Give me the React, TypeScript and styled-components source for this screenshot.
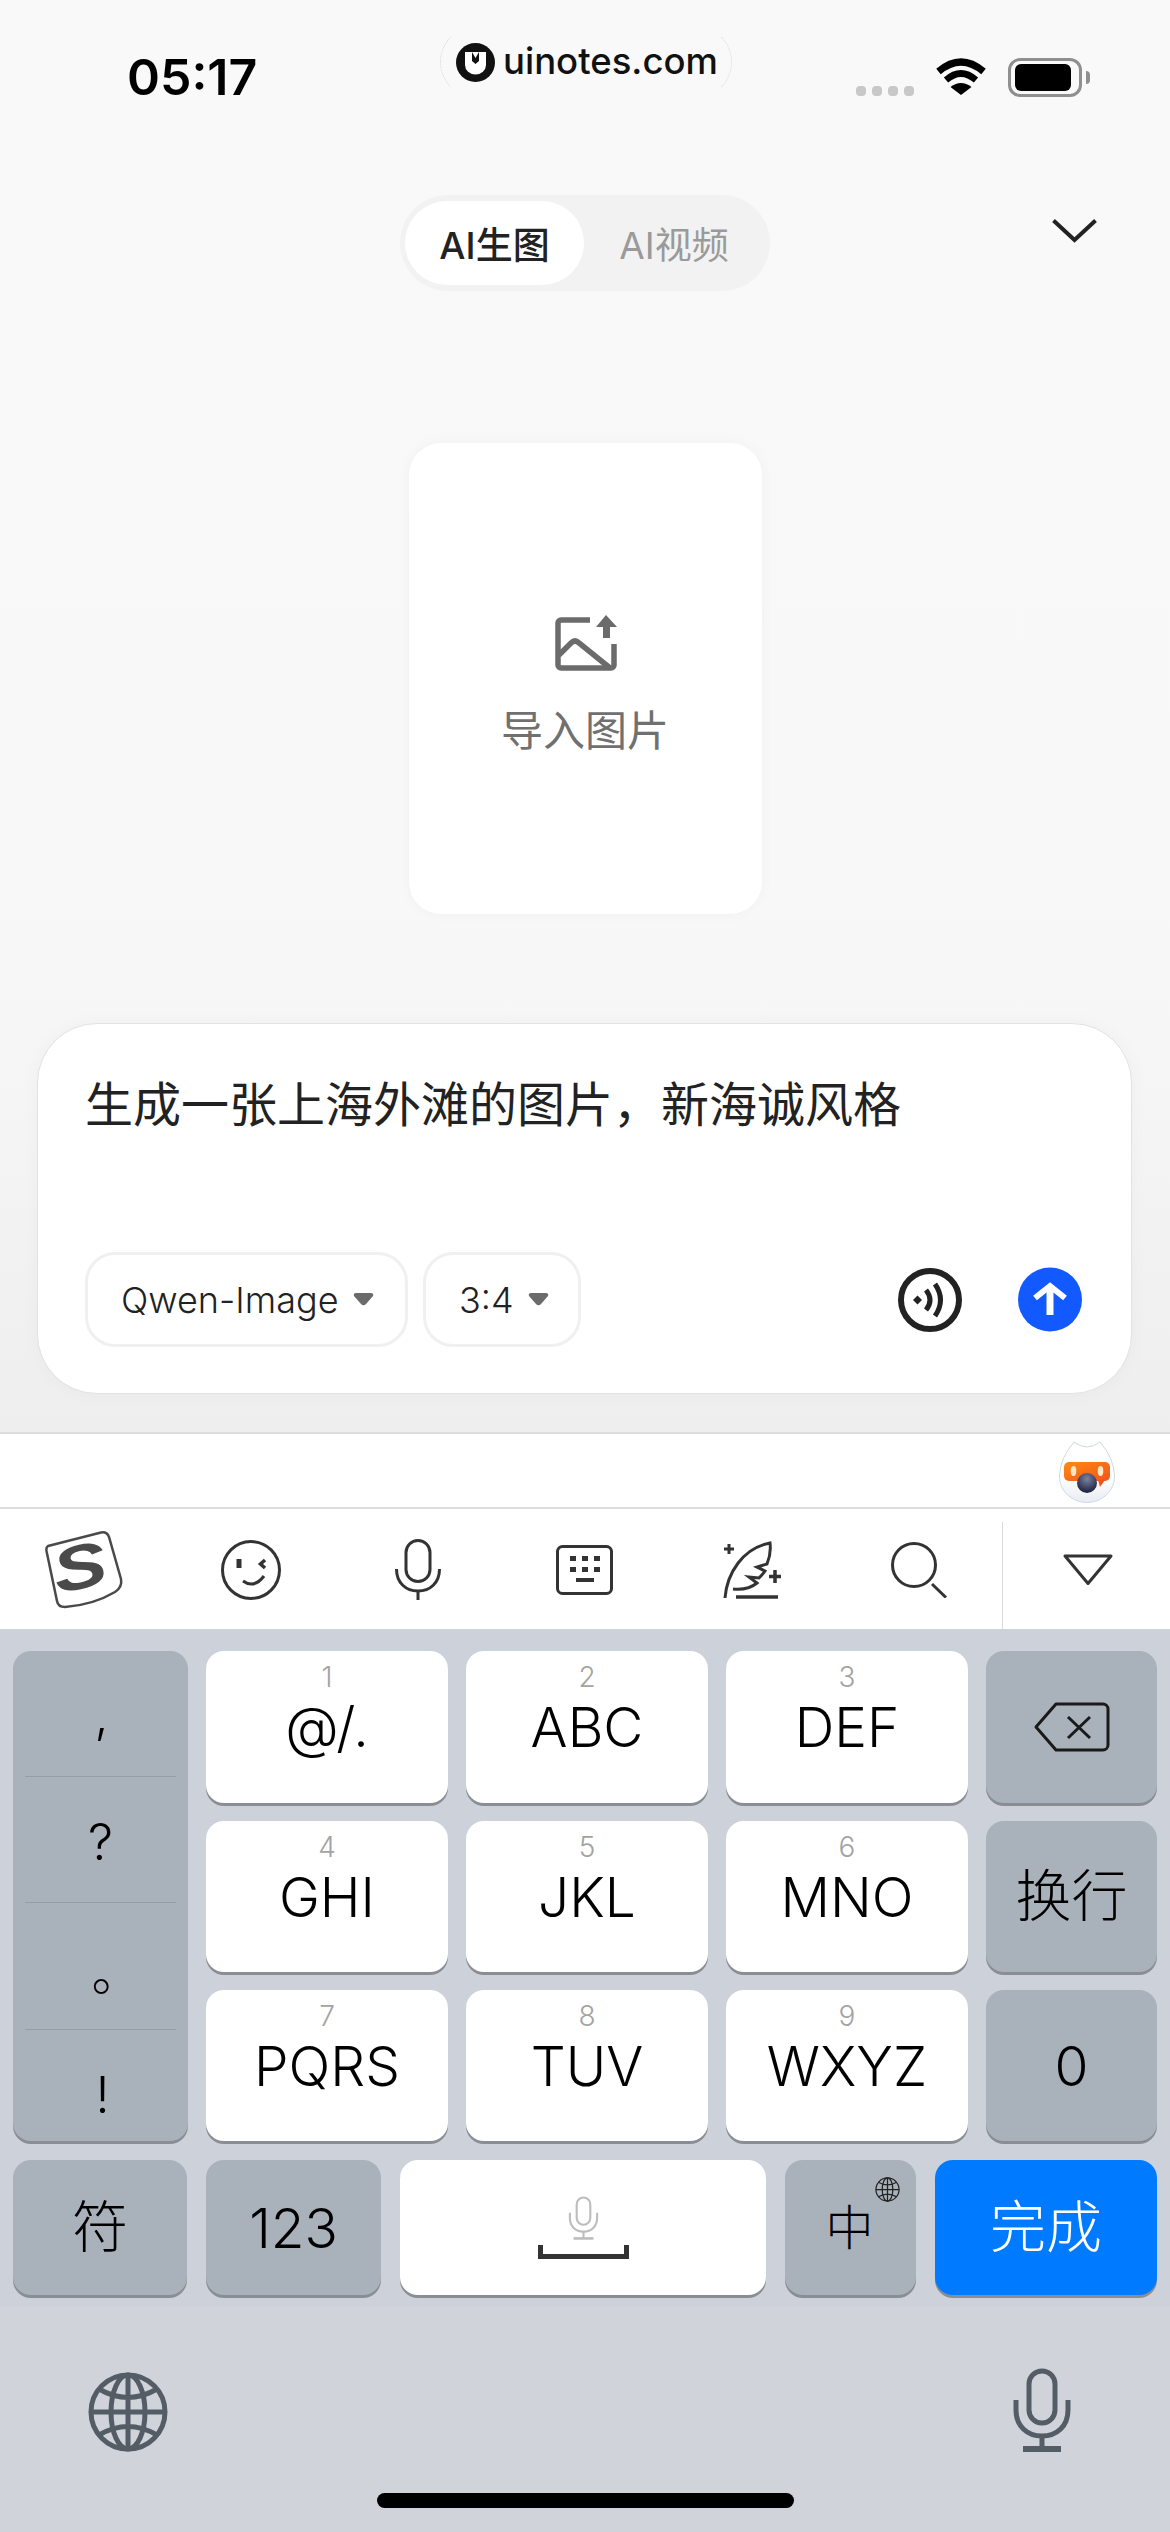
import { Fragment } from 'react';
import styled, { createGlobalStyle } from 'styled-components';

const FONT = `Inter, "Noto Sans CJK SC", sans-serif`;

const GlobalStyle = createGlobalStyle`
  html, body {
    margin: 0;
    padding: 0;
    background: #f9f9f9;
  }
  * {
    box-sizing: border-box;
  }
`;

const Page = styled.div`
  width: 1170px;
  height: 2532px;
  overflow: hidden;
  display: flex;
  flex-direction: column;
  font-family: ${FONT};
`;

const Upper = styled.div`
  height: 1432px;
  display: flex;
  flex-direction: column;
  background: linear-gradient(#f9f9f9 0, #f8f8f8 900px, #f5f5f5 1100px, #eeeeee 1432px);
`;

const StatusBar = styled.div`
  height: 110px;
  display: grid;
  grid-template-columns: 440px 292px 1fr;
`;

const Time = styled.div`
  padding: 47px 0 0 127px;
  font-size: 50px;
  line-height: 60px;
  font-weight: 600;
  color: #000;
`;

const LogoPill = styled.div`
  margin-top: 26px;
  height: 72px;
  border: 1px dotted;
  border-color: transparent #d4d4d4;
  border-radius: 36px;
  display: flex;
  align-items: center;
  gap: 8px;
  padding-left: 15px;
`;

const LogoText = styled.span`
  margin-top: -3px;
  font-size: 36.5px;
  font-weight: 500;
  color: #111;
`;

const StatusIcons = styled.div`
  display: flex;
  padding: 58px 0 0 124px;
`;

const SignalDots = styled.div`
  display: flex;
  gap: 6px;
  margin: 28px 22px 0 0;
`;

const SignalDot = styled.span`
  width: 10px;
  height: 10px;
  border-radius: 4px;
  background: #c8c8c8;
`;

const BatteryOuter = styled.div`
  position: relative;
  width: 74px;
  height: 39px;
  margin-left: 22px;
  border: 3px solid #8f8f8f;
  border-radius: 12px;
  padding: 3px 8px 3px 4px;
`;

const BatteryFill = styled.div`
  height: 100%;
  border-radius: 6px;
  background: #000;
`;

const BatteryNub = styled.span`
  position: absolute;
  right: -11px;
  top: 10px;
  width: 4px;
  height: 13px;
  border-radius: 0 4px 4px 0;
  background: #8f8f8f;
`;

const TabRow = styled.div`
  margin-top: 85px;
  display: grid;
  grid-template-columns: 400px 370px 1fr;
`;

const Tabs = styled.div`
  grid-column: 2;
  height: 96px;
  padding: 6px 5px;
  border-radius: 48px;
  background: #f2f2f2;
  display: flex;
`;

const Tab = styled.div<{ $active?: boolean }>`
  width: ${({ $active }) => ($active ? '179px' : '180px')};
  flex-shrink: 0;
  border-radius: 42px;
  display: flex;
  align-items: center;
  justify-content: center;
  font-size: 37px;
  font-weight: ${({ $active }) => ($active ? 500 : 400)};
  color: ${({ $active }) => ($active ? '#222' : '#9a9a9a')};
  background: ${({ $active }) => ($active ? '#fff' : 'transparent')};
`;

const Chevron = styled.svg`
  margin: 24px 0 0 282px;
`;

const ImportCard = styled.div`
  align-self: center;
  margin-top: 152px;
  width: 353px;
  height: 471px;
  border-radius: 32px;
  background: #fff;
  box-shadow: 0 0 14px rgba(0, 0, 0, 0.035);
  display: flex;
  flex-direction: column;
  align-items: center;
  padding-top: 172px;
`;

const ImportLabel = styled.div`
  margin-top: 32px;
  font-size: 42px;
  line-height: 56px;
  color: #707070;
`;

const Composer = styled.div`
  margin: 109px 38px 0 37px;
  height: 371px;
  border: 1px solid #e2e2e2;
  border-radius: 60px;
  background: #fff;
  box-shadow: 0 0 18px rgba(0, 0, 0, 0.03);
  padding: 53px 49px 46px 47px;
  display: flex;
  flex-direction: column;
  justify-content: space-between;
`;

const Prompt = styled.div`
  font-size: 48px;
  line-height: 56px;
  color: #222;
`;

const ComposerBar = styled.div`
  display: flex;
  align-items: center;
`;

const Chip = styled.div<{ $width: number }>`
  width: ${({ $width }) => $width}px;
  height: 95px;
  margin-right: 15px;
  padding-left: 33px;
  border: 3px solid #f0f0f0;
  border-radius: 30px;
  display: flex;
  align-items: center;
  gap: 14px;
  font-size: 36px;
  font-weight: 300;
  color: #222;
`;

const VoiceIcon = styled.svg`
  margin-left: auto;
`;

const SendIcon = styled.svg`
  margin-left: 56px;
`;

const CandidateBar = styled.div`
  height: 77px;
  border-top: 2px solid #dcdcdc;
  border-bottom: 2px solid #dcdcdc;
  background: #fff;
  display: flex;
  justify-content: flex-end;
  padding: 6px 55px 0 0;
`;

const ToolBar = styled.div`
  height: 120px;
  background: #fff;
  display: grid;
  grid-template-columns: repeat(7, 167px);
`;

const ToolCell = styled.div<{ $divided?: boolean }>`
  display: flex;
  align-items: center;
  justify-content: center;
  padding: 0 0 12px ${({ $divided }) => ($divided ? '3px' : '0')};
  margin-top: 13px;
  border-left: ${({ $divided }) => ($divided ? '1px solid #dadada' : 'none')};
`;

const Keyboard = styled.div`
  flex: 1;
  display: flex;
  flex-direction: column;
  background: #cdd1d9;
`;

const KeyArea = styled.div`
  height: 678px;
  padding: 22px 13px 0;
`;

const KeyGrid = styled.div`
  display: grid;
  grid-template-columns: 175px 242px 242px 242px 171px;
  grid-template-rows: 152px 151px 151px;
  gap: 18px;
`;

const BottomRow = styled.div`
  margin-top: 19px;
  display: flex;
  gap: 19px;
`;

const Key = styled.div<{ $tone?: 'light' | 'dark' | 'blue'; $width?: number }>`
  position: relative;
  ${({ $width }) => ($width ? `width: ${$width}px; height: 135px;` : '')}
  border-radius: 18px;
  display: flex;
  flex-direction: column;
  align-items: center;
  justify-content: center;
  font-weight: 300;
  color: ${({ $tone }) => ($tone === 'blue' ? '#fff' : '#000')};
  background: ${({ $tone }) =>
    $tone === 'blue' ? '#007aff' : $tone === 'dark' ? '#a9b1ba' : '#fff'};
  box-shadow: 0 3px 0 #8a8e94;
`;

const NumberKey = styled(Key)`
  justify-content: flex-start;
  padding-top: 9px;
`;

const KeyDigit = styled.div`
  font-size: 28px;
  line-height: 34px;
  color: #a3a3a3;
`;

const KeyLetters = styled.div`
  margin-top: 2px;
  font-size: 55px;
  line-height: 62px;
`;

const KeyLabel = styled.div<{ $size?: number; $shift?: number }>`
  margin-left: ${({ $shift }) => $shift || 0}px;
  font-size: ${({ $size }) => $size || 56}px;
  line-height: 1.2;
`;

const PunctuationKey = styled(Key)`
  grid-row: 1 / span 3;
  justify-content: flex-start;
  padding: 0 12px;
`;

const Punctuation = styled.div<{ $height: number; $pull: number; $shift?: number; $last?: boolean }>`
  width: 100%;
  height: ${({ $height }) => $height}px;
  display: flex;
  align-items: center;
  justify-content: center;
  padding-top: ${({ $pull }) => $pull}px;
  padding-left: ${({ $shift }) => $shift || 0}px;
  font-size: 50px;
  font-weight: 300;
  border-bottom: ${({ $last }) => ($last ? 'none' : '1px solid #959ca6')};
`;

const SmallGlobe = styled.svg`
  position: absolute;
  top: 16px;
  right: 16px;
`;

const SpaceBar = styled.div`
  width: 91px;
  height: 14px;
  margin-top: 5px;
  border: 5px solid #333;
  border-top: none;
`;

const Footer = styled.div`
  flex: 1;
  background: #d0d4da;
  display: flex;
  flex-direction: column;
  padding-top: 60px;
`;

const FooterIcons = styled.div`
  height: 85px;
  display: flex;
  align-items: flex-end;
  justify-content: space-between;
  padding: 0 99px 0 88px;
`;

const HomeBar = styled.div`
  align-self: center;
  width: 417px;
  height: 15px;
  margin-top: 41px;
  border-radius: 8px;
  background: #000;
`;

function UinotesLogo() {
  return (
    <svg width="39" height="39" viewBox="0 0 39 39">
      <circle cx="19.5" cy="19.5" r="19.5" fill="#111" />
      <path d="M9 9h21v13a10.5 9.5 0 0 1-21 0z" fill="#fff" />
      <path d="M16 9v9l3.500 3 3.500-3V9l-3.500 6z" fill="#111" />
    </svg>
  );
}

function Wifi() {
  return (
    <svg width="50" height="37" viewBox="0 0 50 37" fill="none" stroke="#000">
      <path d="M2.500 13.500Q25-5.500 47.500 13.500" strokeWidth="7" />
      <path d="M10 22Q25 9 40 22" strokeWidth="6.500" />
      <path d="M25 37L14.500 29Q25 21 35.500 29z" fill="#000" stroke="none" />
    </svg>
  );
}

function ImageUpload() {
  return (
    <svg width="63" height="56" viewBox="0 0 63 56" fill="none" stroke="#6b6b6b" strokeWidth="5.500">
      <path d="M36 5H7a3 3 0 0 0-3 3v42a3 3 0 0 0 3 3h50a3 3 0 0 0 3-3V29" />
      <path d="M5 40L17 28Q21 24 25 28L56 53" />
      <path d="M52 0L63 12H56V23H49V12H42z" fill="#6b6b6b" stroke="none" />
    </svg>
  );
}

function SoundWave() {
  return (
    <VoiceIcon width="64" height="64" viewBox="0 0 64 64" fill="none" stroke="#222">
      <circle cx="32" cy="32" r="29" strokeWidth="6" />
      <path d="M19.500 27.500L24 32L19.500 36.500L15 32z" fill="#222" stroke="none" />
      <path d="M28 22Q36 32 28 42" strokeWidth="5" />
      <path d="M37 16Q48 32 37 48" strokeWidth="5" />
    </VoiceIcon>
  );
}

function SendButton() {
  return (
    <SendIcon width="64" height="65" viewBox="0 0 64 65" fill="none">
      <circle cx="32" cy="32.500" r="32" fill="#1259ff" />
      <path d="M32 19V48" stroke="#fff" strokeWidth="7" />
      <path d="M17 31L32 19L47 31" stroke="#fff" strokeWidth="6" />
    </SendIcon>
  );
}

function Caret() {
  return (
    <svg width="21" height="13" viewBox="0 0 21 13">
      <path d="M3 0H18Q21 0 20 3L13 11Q10.500 13.500 8 11L1 3Q0 0 3 0z" fill="#6b6b6b" />
    </svg>
  );
}

function Mascot() {
  return (
    <svg width="56" height="63" viewBox="0 0 56 63">
      <defs>
        <linearGradient id="egg" x1="0" y1="0" x2="0" y2="1">
          <stop offset="0.6" stopColor="#ffffff" />
          <stop offset="1" stopColor="#e8ebf4" />
        </linearGradient>
        <linearGradient id="band" x1="0" y1="0" x2="1" y2="1">
          <stop offset="0" stopColor="#ff8a12" />
          <stop offset="1" stopColor="#f2541b" />
        </linearGradient>
        <radialGradient id="nose" cx="0.5" cy="0.3" r="0.7">
          <stop offset="0" stopColor="#7b83a3" />
          <stop offset="1" stopColor="#1b1e3c" />
        </radialGradient>
      </defs>
      <path
        d="M15 2Q22 7 28 7Q34 7 41 2Q55 18 55.500 36C55.500 52 42 62.500 28 62.500C14 62.500 0.500 52 0.500 36Q1 18 15 2z"
        fill="url(#egg)"
        stroke="#d3d7e4"
      />
      <rect x="5" y="22" width="46" height="19" rx="5" fill="url(#band)" />
      <path d="M39 40H46L41 47z" fill="#f2541b" />
      <ellipse cx="14.500" cy="31" rx="2.800" ry="5" fill="#ffe9c4" />
      <ellipse cx="41.500" cy="31" rx="2.800" ry="5" fill="#ffe9c4" />
      <circle cx="28" cy="43" r="10" fill="url(#nose)" />
    </svg>
  );
}

function SogouLogo() {
  return (
    <svg width="78" height="78" viewBox="0 0 78 78" overflow="visible">
      <path
        d="M3 15L56 1.500Q62 0.500 64 6L76 48Q77.500 56 70 61Q48 74 20 76Q13 76 12 70L1.500 20Q1 16 3 15z"
        fill="none"
        stroke="#4a4a4a"
        strokeWidth="2.500"
      />
      <text
        transform="translate(39 57) rotate(-12) scale(1.3 1)"
        textAnchor="middle"
        fontFamily="Liberation Sans"
        fontWeight="700"
        fontStyle="italic"
        fontSize="62"
        fill="#4a4a4a"
      >
        S
      </text>
    </svg>
  );
}

function Wink() {
  return (
    <svg width="60" height="60" viewBox="0 0 60 60" fill="none" stroke="#333" strokeWidth="3">
      <circle cx="30" cy="30" r="28.500" />
      <path d="M18 19V28" strokeWidth="5" />
      <path d="M44 20L39.500 24L44 28" strokeWidth="3.500" />
      <path d="M22 41Q33 49 43 36" />
    </svg>
  );
}

function ToolMic() {
  return (
    <svg width="46" height="61" viewBox="0 0 46 61" fill="none" stroke="#333" strokeWidth="3">
      <rect x="11" y="1.500" width="24" height="41" rx="12" />
      <path d="M1.500 30C1.500 44 11 52 23 52C35 52 44.500 44 44.500 30" />
      <path d="M23 52V61" />
    </svg>
  );
}

function KeyboardGlyph() {
  return (
    <svg width="57" height="50" viewBox="0 0 57 50" fill="#333">
      <rect x="1.500" y="1.500" width="54" height="47" rx="5" fill="none" stroke="#333" strokeWidth="3" />
      {[14, 26, 38].map((x) => (
        <rect key={x} x={x} y="11" width="6" height="5" />
      ))}
      {[14, 26, 38].map((x) => (
        <rect key={x} x={x} y="22" width="6" height="5" />
      ))}
      <rect x="20" y="33" width="18" height="4" />
    </svg>
  );
}

function Quill() {
  return (
    <svg width="58" height="58" viewBox="0 0 58 58" fill="none" stroke="#333" strokeWidth="3">
      <path d="M2 57C4 32 20 7 47 2C48 10 47 16 44 23L34 26L42 30C40 33 38 35 36 37L26 36L34 42C28 47 20 49 10 48" />
      <path d="M13 56H55" strokeWidth="3.500" />
      <path d="M6 3V13M1 8H11" />
      <path d="M52 29V42M46 35.500H58" strokeWidth="3.500" />
    </svg>
  );
}

function Search() {
  return (
    <svg width="56" height="56" viewBox="0 0 56 56" fill="none" stroke="#333" strokeWidth="3">
      <circle cx="23" cy="23" r="21.500" />
      <path d="M41 42L55 55.500" />
    </svg>
  );
}

function Collapse() {
  return (
    <svg width="52" height="32" viewBox="0 0 52 32" fill="none" stroke="#333" strokeWidth="3" strokeLinejoin="round">
      <path d="M3 2H49L26 29.500z" />
    </svg>
  );
}

function Backspace() {
  return (
    <svg width="76" height="50" viewBox="0 0 76 50" fill="none" stroke="#1a1a1a" strokeWidth="3">
      <path d="M22 2H69a5 5 0 0 1 5 5V43a5 5 0 0 1-5 5H22L2 25z" strokeLinejoin="round" />
      <path d="M34 15L56 36M56 15L34 36" />
    </svg>
  );
}

function Globe({ size, color, weight }: { size: number; color: string; weight: number }) {
  return (
    <svg width={size} height={size} viewBox="0 0 80 80" fill="none" stroke={color} strokeWidth={weight}>
      <circle cx="40" cy="40" r="37" />
      <ellipse cx="40" cy="40" rx="17" ry="37" />
      <path d="M40 3V77M3 40H77M11 17Q40 34 69 17M11 63Q40 46 69 63" />
    </svg>
  );
}

function Microphone({ width, height, color, weight }: { width: number; height: number; color: string; weight: number }) {
  return (
    <svg width={width} height={height} viewBox="0 0 58 84" fill="none" stroke={color} strokeWidth={weight}>
      <rect x="16" y="3" width="26" height="52" rx="13" />
      <path d="M3 32V42C3 58 14 68 29 68C44 68 55 58 55 42V32" />
      <path d="M29 68V80" />
      <path d="M10 81H48" strokeWidth={weight + 1} />
    </svg>
  );
}

const NUMBER_KEYS = [
  ['1', '@/.'],
  ['2', 'ABC'],
  ['3', 'DEF'],
  ['4', 'GHI'],
  ['5', 'JKL'],
  ['6', 'MNO'],
  ['7', 'PQRS'],
  ['8', 'TUV'],
  ['9', 'WXYZ'],
];

function App() {
  const side = (row: number) => {
    if (row === 0) return <Backspace />;
    if (row === 1) return <KeyLabel>换行</KeyLabel>;
    return <KeyLabel $size={55}>0</KeyLabel>;
  };

  return (
    <Page>
      <GlobalStyle />
      <Upper>
        <StatusBar>
          <Time>05:17</Time>
          <LogoPill>
            <UinotesLogo />
            <LogoText>uinotes.com</LogoText>
          </LogoPill>
          <StatusIcons>
            <SignalDots>
              <SignalDot />
              <SignalDot />
              <SignalDot />
              <SignalDot />
            </SignalDots>
            <Wifi />
            <BatteryOuter>
              <BatteryFill />
              <BatteryNub />
            </BatteryOuter>
          </StatusIcons>
        </StatusBar>

        <TabRow>
          <Tabs>
            <Tab $active>AI生图</Tab>
            <Tab>AI视频</Tab>
          </Tabs>
          <Chevron width="45" height="24" viewBox="0 0 45 24" fill="none" stroke="#222" strokeWidth="4">
            <path d="M1.500 1.500L22.500 21L43.500 1.500" />
          </Chevron>
        </TabRow>

        <ImportCard>
          <ImageUpload />
          <ImportLabel>导入图片</ImportLabel>
        </ImportCard>

        <Composer>
          <Prompt>生成一张上海外滩的图片，新海诚风格</Prompt>
          <ComposerBar>
            <Chip $width={323}>
              Qwen-Image
              <Caret />
            </Chip>
            <Chip $width={158}>
              3:4
              <Caret />
            </Chip>
            <SoundWave />
            <SendButton />
          </ComposerBar>
        </Composer>
      </Upper>

      <CandidateBar>
        <Mascot />
      </CandidateBar>

      <ToolBar>
        <ToolCell>
          <SogouLogo />
        </ToolCell>
        <ToolCell>
          <Wink />
        </ToolCell>
        <ToolCell>
          <ToolMic />
        </ToolCell>
        <ToolCell>
          <KeyboardGlyph />
        </ToolCell>
        <ToolCell>
          <Quill />
        </ToolCell>
        <ToolCell>
          <Search />
        </ToolCell>
        <ToolCell $divided>
          <Collapse />
        </ToolCell>
      </ToolBar>

      <Keyboard>
        <KeyArea>
          <KeyGrid>
            <PunctuationKey $tone="dark">
              <Punctuation $height={126} $pull={4} $shift={2}>,</Punctuation>
              <Punctuation $height={127} $pull={4}>?</Punctuation>
              <Punctuation $height={127} $pull={6} $shift={32}>。</Punctuation>
              <Punctuation $height={111} $pull={18} $shift={4} $last>!</Punctuation>
            </PunctuationKey>
            {NUMBER_KEYS.map(([digit, letters], index) => (
              <Fragment key={digit}>
                <NumberKey>
                  <KeyDigit>{digit}</KeyDigit>
                  <KeyLetters>{letters}</KeyLetters>
                </NumberKey>
                {index % 3 === 2 && <Key $tone="dark">{side((index - 2) / 3)}</Key>}
              </Fragment>
            ))}
          </KeyGrid>

          <BottomRow>
            <Key $tone="dark" $width={174}>
              <KeyLabel>符</KeyLabel>
            </Key>
            <Key $tone="dark" $width={175}>
              <KeyLabel $size={55}>123</KeyLabel>
            </Key>
            <Key $width={366}>
              <Microphone width={31} height={44} color="#bdbdbd" weight={4} />
              <SpaceBar />
            </Key>
            <Key $tone="dark" $width={131}>
              <KeyLabel $size={48} $shift={-2}>中</KeyLabel>
              <SmallGlobe width="25" height="27" viewBox="0 0 80 80" fill="none" stroke="#222" strokeWidth="4">
                <circle cx="40" cy="40" r="37" />
                <ellipse cx="40" cy="40" rx="17" ry="37" />
                <path d="M40 3V77M3 40H77M11 17Q40 34 69 17M11 63Q40 46 69 63" />
              </SmallGlobe>
            </Key>
            <Key $tone="blue" $width={222}>
              <KeyLabel>完成</KeyLabel>
            </Key>
          </BottomRow>
        </KeyArea>

        <Footer>
          <FooterIcons>
            <Globe size={80} color="#545c66" weight={5} />
            <Microphone width={58} height={84} color="#545c66" weight={5} />
          </FooterIcons>
          <HomeBar />
        </Footer>
      </Keyboard>
    </Page>
  );
}

export default App;
